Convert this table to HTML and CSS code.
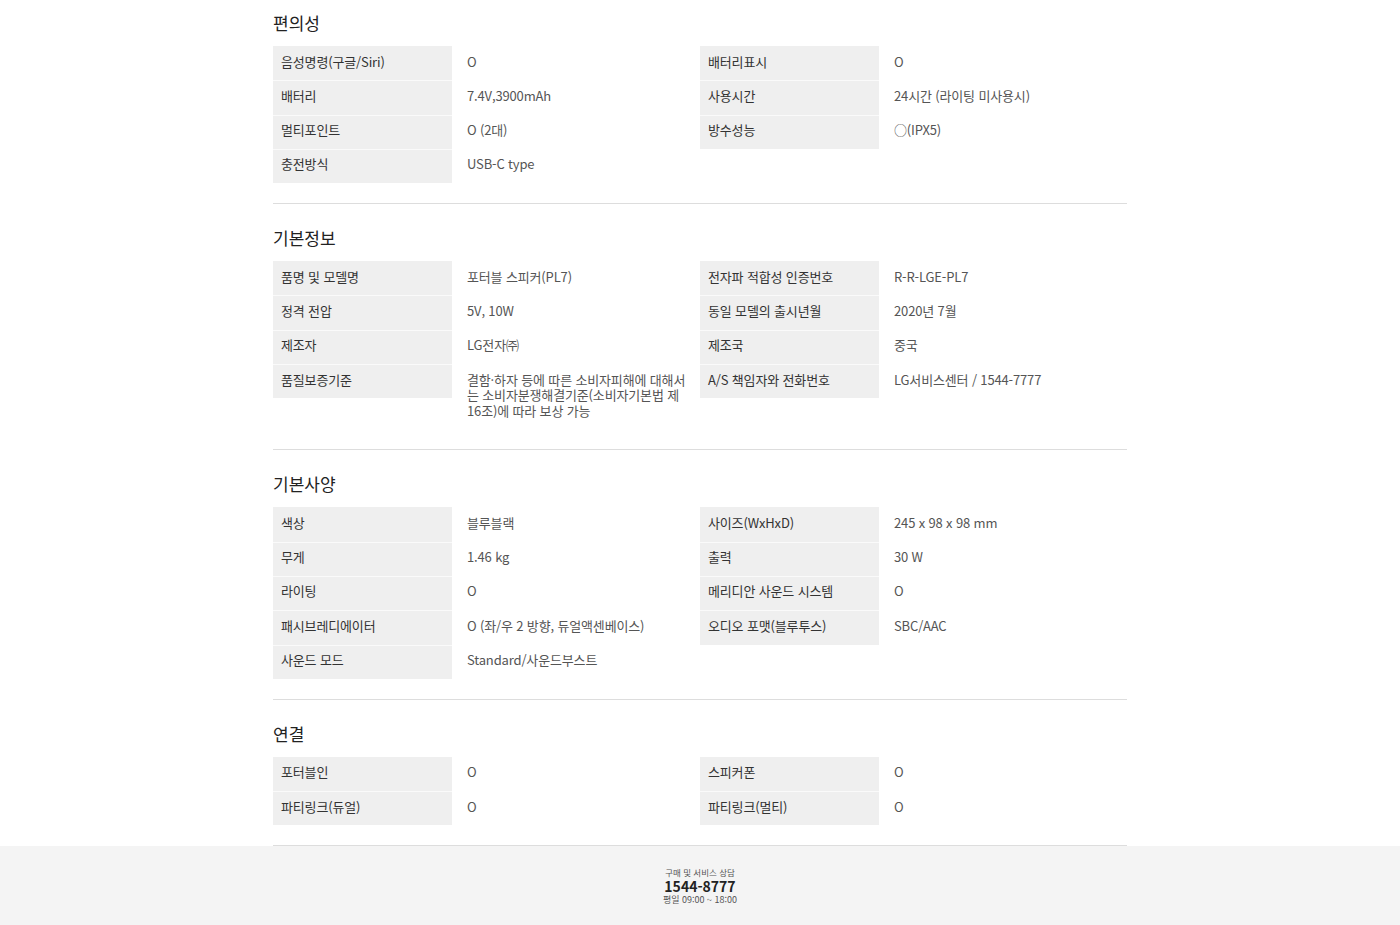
FILE: index.html
```html
<!DOCTYPE html>
<html lang="ko">
<head>
	<meta charset="utf-8">
	<title>제품 사양</title>
	<link rel="stylesheet" href="styles.css">
</head>
<body>

<div id="spec">
	<!-- 편의성 -->
	<div class="group first">
		<h3>편의성</h3>
		<div class="cols">
			<dl>
				<div class="row"><dt>음성명령(구글/Siri)</dt><dd>O</dd></div>
				<div class="row"><dt>배터리</dt><dd>7.4V,3900mAh</dd></div>
				<div class="row"><dt>멀티포인트</dt><dd>O (2대)</dd></div>
				<div class="row"><dt>충전방식</dt><dd>USB-C type</dd></div>
			</dl>
			<dl>
				<div class="row"><dt>배터리표시</dt><dd>O</dd></div>
				<div class="row"><dt>사용시간</dt><dd>24시간 (라이팅 미사용시)</dd></div>
				<div class="row"><dt>방수성능</dt><dd>○(IPX5)</dd></div>
			</dl>
		</div>
	</div>

	<!-- 기본정보 -->
	<div class="group">
		<h3>기본정보</h3>
		<div class="cols">
			<dl>
				<div class="row"><dt>품명 및 모델명</dt><dd>포터블 스피커(PL7)</dd></div>
				<div class="row"><dt>정격 전압</dt><dd>5V, 10W</dd></div>
				<div class="row"><dt>제조자</dt><dd>LG전자㈜</dd></div>
				<div class="row"><dt>품질보증기준</dt><dd>결함·하자 등에 따른 소비자피해에 대해서<br>는 소비자분쟁해결기준(소비자기본법 제<br>16조)에 따라 보상 가능</dd></div>
			</dl>
			<dl>
				<div class="row"><dt>전자파 적합성 인증번호</dt><dd>R-R-LGE-PL7</dd></div>
				<div class="row"><dt>동일 모델의 출시년월</dt><dd>2020년 7월</dd></div>
				<div class="row"><dt>제조국</dt><dd>중국</dd></div>
				<div class="row"><dt>A/S 책임자와 전화번호</dt><dd>LG서비스센터 / 1544-7777</dd></div>
			</dl>
		</div>
	</div>

	<!-- 기본사양 -->
	<div class="group">
		<h3>기본사양</h3>
		<div class="cols">
			<dl>
				<div class="row"><dt>색상</dt><dd>블루블랙</dd></div>
				<div class="row"><dt>무게</dt><dd>1.46 kg</dd></div>
				<div class="row"><dt>라이팅</dt><dd>O</dd></div>
				<div class="row"><dt>패시브레디에이터</dt><dd>O (좌/우 2 방향, 듀얼액센베이스)</dd></div>
				<div class="row"><dt>사운드 모드</dt><dd>Standard/사운드부스트</dd></div>
			</dl>
			<dl>
				<div class="row"><dt>사이즈(WxHxD)</dt><dd>245 x 98 x 98 mm</dd></div>
				<div class="row"><dt>출력</dt><dd>30 W</dd></div>
				<div class="row"><dt>메리디안 사운드 시스템</dt><dd>O</dd></div>
				<div class="row"><dt>오디오 포맷(블루투스)</dt><dd>SBC/AAC</dd></div>
			</dl>
		</div>
	</div>

	<!-- 연결 -->
	<div class="group">
		<h3>연결</h3>
		<div class="cols">
			<dl>
				<div class="row"><dt>포터블인</dt><dd>O</dd></div>
				<div class="row"><dt>파티링크(듀얼)</dt><dd>O</dd></div>
			</dl>
			<dl>
				<div class="row"><dt>스피커폰</dt><dd>O</dd></div>
				<div class="row"><dt>파티링크(멀티)</dt><dd>O</dd></div>
			</dl>
		</div>
	</div>
</div>

<div id="footer">
	<p class="label">구매 및 서비스 상담</p>
	<p class="tel">1544-8777</p>
	<p class="time">평일 09:00 ~ 18:00</p>
</div>

</body>
</html>
```

FILE: styles.css
```css
html,body{
	margin:0; padding:0;
}
body{
	background:#fff;
	font-family:"Noto Sans CJK KR","Noto Sans",sans-serif;
	color:#333;
}
dl,dt,dd,p,h3{
	margin:0; padding:0;
}

/*사양*/
#spec{
	width:854px; margin:0 auto;
}
#spec .group{
	padding:22px 0 20px;
	border-bottom:1px solid #ddd;
}
#spec .group.first{
	padding-top:11px;
}
#spec h3{
	margin-bottom:11px;
	font-size:17px; font-weight:400; line-height:24px; color:#222;
}
#spec .cols{
	display:flex;
}
#spec dl{
	width:427px;
}
#spec .row{
	display:flex; align-items:flex-start;
}
#spec .row + .row dt{
	box-shadow:inset 0 1px 0 #fafafa;
}
#spec dt{
	width:179px; flex:none; box-sizing:border-box;
	padding:7.5px 7px 11.3px 8px;
	background:#efefef;
	font-size:13px; line-height:15.5px; color:#333; letter-spacing:-0.15px;
}
#spec dd{
	flex:1; box-sizing:border-box;
	padding:7.5px 6px 11.3px 15px;
	font-size:13px; line-height:15.5px; color:#555; letter-spacing:-0.15px;
}

/*하단*/
#footer{
	height:79px; box-sizing:border-box;
	padding-top:19px; background:#f4f4f4;
	text-align:center;
}
#footer .label{
	font-size:8.5px; line-height:14px; color:#555;
}
#footer .time{
	font-size:9px; line-height:14px; color:#555;
}
#footer .tel{
	font-size:14px; font-weight:bold; line-height:14px; color:#222;
}
```
